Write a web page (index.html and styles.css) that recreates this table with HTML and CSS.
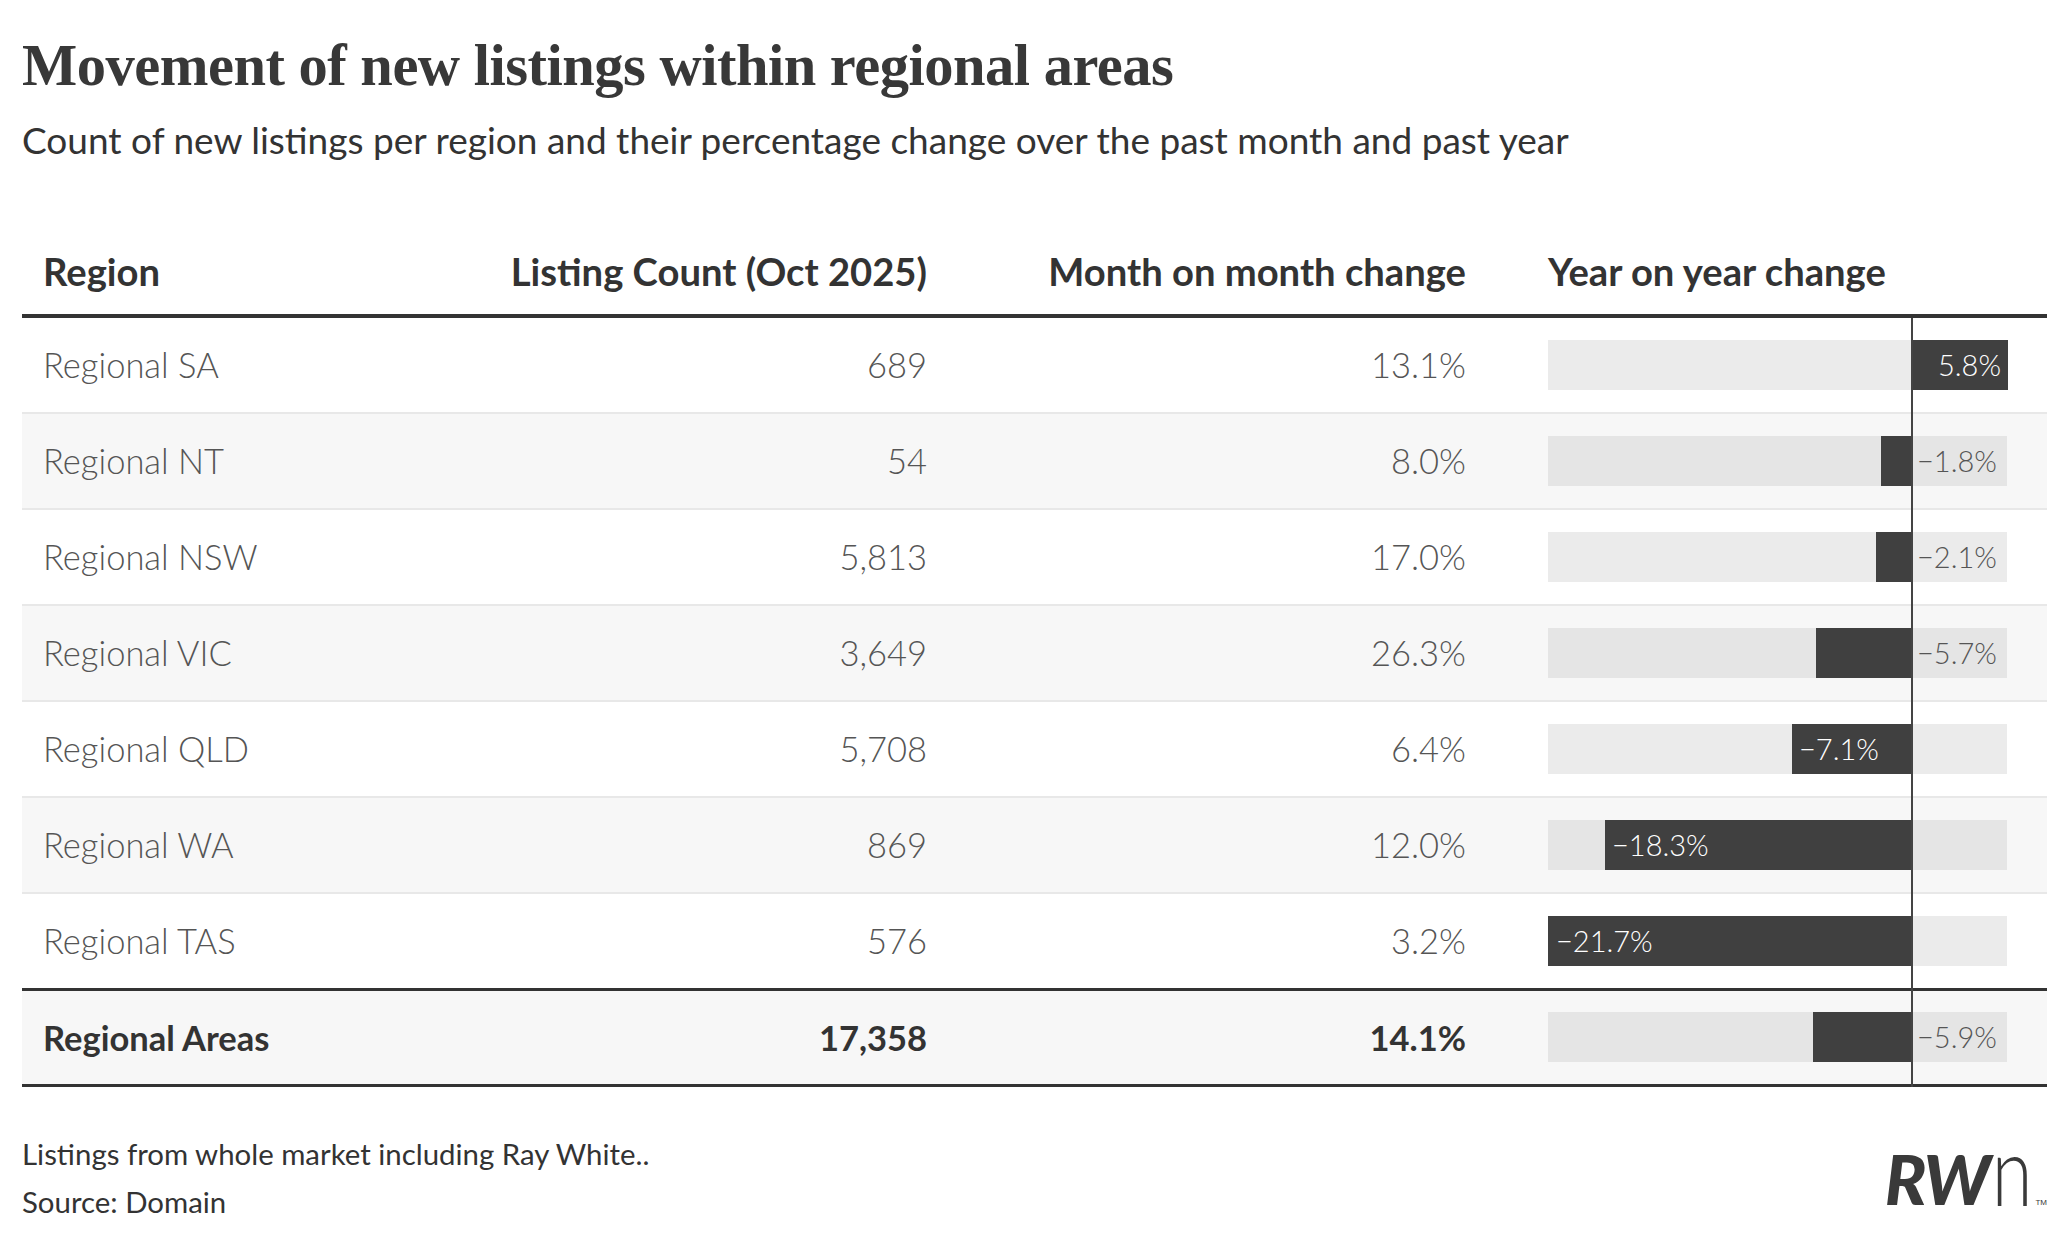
FILE: index.html
```html
<!DOCTYPE html>
<html lang="en">
<head>
<meta charset="utf-8">
<title>Movement of new listings within regional areas</title>
<link rel="stylesheet" href="styles.css">
</head>
<body>
<div class="page">
  <header class="head">
    <h1 class="title">Movement of new listings within regional areas</h1>
    <p class="subtitle">Count of new listings per region and their percentage change over the past month and past year</p>
  </header>

  <div class="table">
    <div class="row row-head">
      <div class="c1">Region</div>
      <div class="c2">Listing Count (Oct 2025)</div>
      <div class="c3">Month on month change</div>
      <div class="c4">Year on year change</div>
    </div>
    <div class="tbody">
      <div class="row">
        <div class="c1">Regional SA</div><div class="c2">689</div><div class="c3">13.1%</div>
        <div class="c4"><div class="track"><div class="bar" style="left:363px;width:97px"></div><span class="lbl in-pos" style="right:6px">5.8%</span></div></div>
      </div>
      <div class="row alt">
        <div class="c1">Regional NT</div><div class="c2">54</div><div class="c3">8.0%</div>
        <div class="c4"><div class="track"><div class="bar" style="left:333px;width:30px"></div><span class="lbl out" style="left:369px">−1.8%</span></div></div>
      </div>
      <div class="row">
        <div class="c1">Regional NSW</div><div class="c2">5,813</div><div class="c3">17.0%</div>
        <div class="c4"><div class="track"><div class="bar" style="left:328px;width:35px"></div><span class="lbl out" style="left:369px">−2.1%</span></div></div>
      </div>
      <div class="row alt">
        <div class="c1">Regional VIC</div><div class="c2">3,649</div><div class="c3">26.3%</div>
        <div class="c4"><div class="track"><div class="bar" style="left:268px;width:95px"></div><span class="lbl out" style="left:369px">−5.7%</span></div></div>
      </div>
      <div class="row">
        <div class="c1">Regional QLD</div><div class="c2">5,708</div><div class="c3">6.4%</div>
        <div class="c4"><div class="track"><div class="bar" style="left:244px;width:119px"></div><span class="lbl in" style="left:251px">−7.1%</span></div></div>
      </div>
      <div class="row alt">
        <div class="c1">Regional WA</div><div class="c2">869</div><div class="c3">12.0%</div>
        <div class="c4"><div class="track"><div class="bar" style="left:57px;width:306px"></div><span class="lbl in" style="left:64px">−18.3%</span></div></div>
      </div>
      <div class="row last">
        <div class="c1">Regional TAS</div><div class="c2">576</div><div class="c3">3.2%</div>
        <div class="c4"><div class="track"><div class="bar" style="left:0;width:363px"></div><span class="lbl in" style="left:8px">−21.7%</span></div></div>
      </div>
      <div class="row total alt">
        <div class="c1">Regional Areas</div><div class="c2">17,358</div><div class="c3">14.1%</div>
        <div class="c4"><div class="track"><div class="bar" style="left:265px;width:98px"></div><span class="lbl out" style="left:369px">−5.9%</span></div></div>
      </div>
      <div class="axis"></div>
    </div>
  </div>

  <footer class="foot">
    <div class="notes">
      <p class="note">Listings from whole market including Ray White..</p>
      <p class="source">Source: Domain</p>
    </div>
    <div class="logo"><span class="rw">RW</span><span class="n">n</span><span class="tm">TM</span></div>
  </footer>
</div>
</body>
</html>
```

FILE: styles.css
```css
html, body {
  margin: 0;
  padding: 0;
  background: #ffffff;
}

.page {
  padding: 0 6px 0 22px;
  color: #333333;
  font-family: Lato, "Open Sans", sans-serif;
}

.head {
  padding-top: 37px;
}

.title {
  margin: 0;
  font-family: "Liberation Serif", "DejaVu Serif", serif;
  font-weight: 700;
  font-size: 58.5px;
  line-height: 1;
  color: #383838;
  letter-spacing: -0.5px;
}

.subtitle {
  margin: 22px 0 0 0;
  font-size: 37px;
  line-height: 1.2;
  font-weight: 400;
  color: #333333;
}

.table {
  margin-top: 86px;
}

.row {
  display: grid;
  grid-template-columns: 478px 427px 539px 1fr;
  align-items: center;
  height: 94px;
  border-bottom: 2px solid #e8e8e8;
  font-size: 34.5px;
  font-weight: 300;
  color: #555555;
}

.row.alt {
  background: #f7f7f7;
}

.row.last {
  border-bottom: 3px solid #333333;
}

.row-head {
  height: 66px;
  align-items: start;
  border-bottom: 4px solid #333333;
  font-weight: 700;
  font-size: 38.2px;
  color: #333333;
}

.c1 {
  padding-left: 21px;
}

.c2, .c3 {
  text-align: right;
}

.c4 {
  padding-left: 82px;
}

.row.total {
  height: 93px;
  border-bottom: 3px solid #333333;
  font-weight: 700;
  color: #333333;
}

.tbody {
  position: relative;
}

.axis {
  position: absolute;
  top: 0;
  bottom: 0;
  left: 1889px;
  width: 2px;
  background: #444444;
}

.track {
  position: relative;
  width: 459px;
  height: 50px;
  background: #ebebeb;
}

.row.alt .track {
  background: #e5e5e5;
}

.bar {
  position: absolute;
  top: 0;
  bottom: 0;
  background: #404040;
}

.lbl {
  position: absolute;
  top: 0;
  line-height: 50px;
  font-size: 29px;
  font-weight: 300;
  white-space: nowrap;
}

.lbl.in, .lbl.in-pos {
  color: #ffffff;
}

.lbl.out {
  color: #555555;
}

.foot {
  display: flex;
  justify-content: space-between;
  align-items: flex-end;
  margin-top: 43px;
}

.note, .source {
  margin: 0;
  font-size: 29.4px;
  line-height: 48px;
  color: #333333;
}

.logo {
  display: flex;
  align-items: baseline;
  color: #3a3a3a;
  margin-right: 0;
  margin-bottom: 12px;
}

.rw {
  font-family: Lato, "Liberation Sans", sans-serif;
  font-weight: 900;
  font-style: italic;
  font-size: 69px;
  line-height: 1;
  letter-spacing: -2px;
}

.n {
  display: inline-block;
  font-family: Lato, "Liberation Sans", sans-serif;
  font-weight: 300;
  font-size: 74px;
  line-height: 1;
  margin-left: 3px;
  transform: scaleY(1.3);
  transform-origin: 50% 82%;
}

.tm {
  font-size: 8px;
  font-family: "Liberation Sans", sans-serif;
  margin-left: 3px;
}
```
